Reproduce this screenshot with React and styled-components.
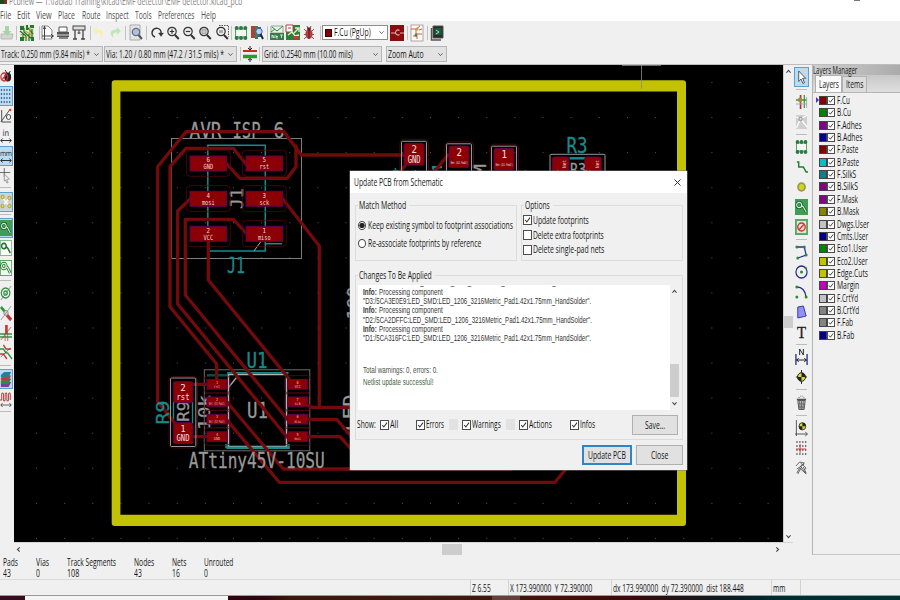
import React, { useLayoutEffect, useRef } from "react";
import styled, { createGlobalStyle, css } from "styled-components";

const Global = createGlobalStyle`
  * { box-sizing: border-box; }
  html, body { margin: 0; padding: 0; overflow: hidden; background: #fff; }
  body { font-family: "Open Sans", "Noto Sans", sans-serif; font-size: 10.2px; color: #161616; }
`;

/* ---------- condensed text ---------- */
const FitBox = styled.span`
  display: inline-block;
  flex: none;
  width: ${(p) => p.$w}px;
  margin-left: ${(p) => p.$ml || 0}px;
  margin-top: -1px;
  white-space: nowrap;
  line-height: 12px;
  height: 12px;
`;
const FitInner = styled.span`
  display: inline-block;
  transform-origin: 0 50%;
  white-space: pre;
`;
function Fit({ w, ml, children }) {
  const ref = useRef(null);
  useLayoutEffect(() => {
    const el = ref.current;
    el.style.transform = `scaleX(${w / el.offsetWidth})`;
  }, [w]);
  return (
    <FitBox $w={w} $ml={ml}>
      <FitInner ref={ref}>{children}</FitInner>
    </FitBox>
  );
}

/* ---------- frame ---------- */
const Window = styled.div`
  width: 900px; height: 600px; overflow: hidden; position: relative;
  display: flex; flex-direction: column; background: #f0f0f0;
`;
const TitleBar = styled.div`
  height: 9px; flex: none; background: #fff; color: #858585; display: flex; align-items: flex-start; overflow: hidden;
`;
const TitleIcon = styled.i`width: 7px; height: 4px; background: linear-gradient(90deg, #174d17 60%, #8a2a1c 60%);`;
const TitleText = styled.div`margin: -6px 0 0 2px; height: 12px;`;
const TitleButton = styled.i`width: 6px; height: 1px; margin-left: 612px; background: #777;`;
const MenuBar = styled.nav`
  height: 12px; flex: none; background: #fff; display: flex; align-items: center; color: #505050;
`;
const Toolbar = styled.div`
  height: ${(p) => p.$h}px; flex: none; display: flex; align-items: center;
  background: #f0f0f0; border-bottom: ${(p) => (p.$edge ? "1px solid #bdbdbd" : "0")};
`;
const ToolSlot = styled.span`
  width: 14px; height: 16px; flex: none; margin-left: ${(p) => p.$ml}px; display: flex;
`;
const Rule = styled.i`
  width: 1px; height: 14px; flex: none; background: #c2c2c2; margin-left: ${(p) => p.$ml}px;
`;
const Combo = styled.div`
  width: ${(p) => p.$w}px; height: ${(p) => p.$h || 16}px; flex: none; margin-left: ${(p) => p.$ml}px;
  display: flex; align-items: center; justify-content: space-between; padding: 0 3px 0 1px;
  background: ${(p) => (p.$light ? "#fff" : "#e2e2e2")}; border: 1px solid ${(p) => (p.$light ? "#8c8c8c" : "#b5b5b5")};
`;
const ComboSwatch = styled.i`width: 7px; height: 8px; background: #840000; border: 1px solid #3a0000; margin: 0 2px 0 1px;`;
const ComboValue = styled.span`display: flex; align-items: center;`;
const Svg = styled.svg`display: block; width: 100%; height: 100%; overflow: visible;`;

const Workspace = styled.div`height: 490px; flex: none; display: flex;`;
const LeftTools = styled.div`width: 14px; flex: none; overflow: hidden; display: flex; flex-direction: column;`;
const RightTools = styled.div`
  width: 19px; flex: none; display: flex; flex-direction: column; align-items: center; padding-right: 3px;
`;
const SideTool = styled.span`
  flex: none; display: flex; width: ${(p) => (p.$left ? 14 : 15)}px; height: 20px;
  margin-top: ${(p) => p.$mt || 0}px; margin-left: ${(p) => (p.$left ? -1 : 0)}px;
  padding: 2px 1px;
  ${(p) => p.$on && css`background: #b9dcf4; box-shadow: inset 0 0 0 1px #5aa0d0;`}
`;
const SideRule = styled.i`
  flex: none; height: 1px; width: 11px; background: #bcbcbc; margin-top: ${(p) => p.$mt}px;
`;
const Center = styled.div`width: 779px; flex: none; display: flex; flex-direction: column;`;
const CanvasRow = styled.div`height: 477px; display: flex;`;
const Board = styled.svg`width: 769px; height: 477px; display: block; background: #000; flex: none;`;
const VScroll = styled.div`
  width: 10px; flex: none; display: flex; flex-direction: column; align-items: center; border-left: 1px solid #ccc;
`;
const HScroll = styled.div`height: 13px; display: flex; align-items: center; border-top: 1px solid #d5d5d5;`;
const Thumb = styled.i`
  flex: none; background: #cdcdcd; width: ${(p) => p.$w}px; height: ${(p) => p.$h}px;
  margin-top: ${(p) => p.$mt || 0}px; margin-left: ${(p) => p.$ml || 0}px;
`;
const Arrow = styled.svg`
  width: 5px; height: 5px; flex: none; fill: none; stroke: #444; stroke-width: ${(p) => (p.$thin ? 0.9 : 1.3)};
  margin-top: ${(p) => p.$mt || 0}px; margin-left: ${(p) => p.$ml || 0}px;
  transform: rotate(${(p) => p.$r || 0}deg);
`;
const Chevron = (p) => (
  <Arrow viewBox="0 0 6 6" {...p}><path d="M.5 1.5 3 4.3 5.5 1.5" /></Arrow>
);

/* ---------- layers ---------- */
const LayersPanel = styled.aside`
  width: 88px; flex: none; display: flex; flex-direction: column; overflow: hidden;
  border-left: 1px solid #b4b4b4; border-bottom: 1px solid #c8c8c8;
`;
const PanelTitle = styled.div`
  height: 10px; flex: none; display: flex; align-items: center; background: linear-gradient(90deg, #cfcfcf, #ababab);
`;
const TabStrip = styled.div`
  height: 18px; flex: none; display: flex; align-items: flex-end; padding-left: 2px; border-bottom: 1px solid #b5b5b5;
  background: linear-gradient(#c8c8c8, #dedede);
`;
const Tab = styled.div`
  height: ${(p) => (p.$on ? 17 : 16)}px; width: ${(p) => p.$w}px; display: flex; align-items: center; justify-content: center;
  background: ${(p) => (p.$on ? "#fafafa" : "#dcdcdc")}; border: 1px solid #b0b0b0; border-bottom: 0;
`;
const LayerList = styled.div`padding-top: 1.3px; display: flex; flex-direction: column;`;
const LayerRow = styled.div`height: 12.37px; display: flex; align-items: center; padding-left: 1px;`;
const Marker = styled.i`
  width: 0; height: 0; margin: 0 0 0 2px; border: 3px solid transparent; border-right: 0;
  border-left: 3px solid ${(p) => (p.$on ? "#3a3ac8" : "transparent")};
`;
const Swatch = styled.i`width: 8px; height: 9px; background: ${(p) => p.$c}; border: 1px solid #444;`;
const Box = styled.i`
  width: ${(p) => p.$s || 8}px; height: ${(p) => (p.$s ? p.$s + 1 : 9)}px; flex: none; background: #fff; border: 1px solid #4c4c4c;
  display: flex; margin-left: ${(p) => p.$ml || 0}px;
`;
const Tick = () => (
  <Svg viewBox="0 0 6 7"><path d="M1 3.5 2.4 5.2 5.2 1.4" fill="none" stroke="#333" strokeWidth=".9" /></Svg>
);

/* ---------- bottom ---------- */
const Counts = styled.div`height: 25px; flex: none; display: flex; border-bottom: 1px solid #dadada;`;
const Count = styled.div`
  flex: none; width: ${(p) => p.$w}px; padding: 2px 0 0 3px; display: flex; flex-direction: column;
`;
const StatusBar = styled.div`height: 15px; flex: none; display: flex; padding-left: 470px;`;
const StatusCell = styled.div`
  width: ${(p) => p.$w}px; height: 15px; flex: none; border-left: 1px solid #d2d2d2; display: flex; align-items: center;
  padding: 1px 0 0 1px;
`;
const Taskbar = styled.div`
  height: 5px; flex: none; display: flex; border-top: 1px solid #999;
  background: linear-gradient(90deg, #3a0a20 0 228px, #33000f 228px, #2a0710 262px, #3d1707 290px, #40190a 500px, #421004 570px, #350b0b 640px, #0a1c24 730px, #002d35 780px, #002f33);
`;
const TaskActive = styled.i`width: 203px; margin-left: 25px; background: #f4f4f4;`;
const TaskItem = styled.i`width: 28px; margin-left: 264px; background: #664038;`;

/* ---------- dialog ---------- */
const Dialog = styled.section`
  position: absolute; left: 350px; top: 171px; width: 337px; height: 299px; background: #f0f0f0;
  display: flex; flex-direction: column; box-shadow: 0 0 0 .5px #777;
`;
const DialogTitle = styled.header`
  height: 22px; flex: none; background: #fff; display: flex; align-items: center; justify-content: space-between; padding: 0 6px 0 4px;
`;
const CloseX = styled.svg`width: 7px; height: 7px; stroke: #333; stroke-width: 1;`;
const Groups = styled.div`display: flex; gap: 4px; padding: 7px 4px 0 5px; height: 77px; flex: none;`;
const Group = styled.fieldset`
  margin: 0; padding: 0; min-width: 0; border: 0; display: flex; flex-direction: column; width: ${(p) => p.$w}px;
  height: ${(p) => p.$h}px; flex: none;
`;
const GroupHead = styled.div`
  display: flex; align-items: center; height: 11px; flex: none;
  &::before { content: ""; width: 3px; height: 1px; background: #dcdcdc; }
  &::after { content: ""; flex: 1; height: 1px; background: #dcdcdc; margin-left: 3px; }
`;
const GroupBody = styled.div`
  flex: 1; border: 1px solid #dcdcdc; border-top: 0; margin-top: -5px; padding-top: ${(p) => p.$pt || 0}px;
  display: flex; flex-direction: column;
`;
const Choice = styled.div`height: ${(p) => p.$h}px; flex: none; display: flex; align-items: center; padding-left: ${(p) => p.$pl}px; gap: ${(p) => p.$gap || 0}px;`;
const Radio = styled.i`
  width: 8px; height: 9px; border: 1px solid #444; border-radius: 50%; background: #fff; display: flex; flex: none;
  ${(p) => p.$on && css`background: radial-gradient(circle, #222 0 2.3px, #fff 3px);`}
`;
const Changes = styled.div`padding: 0 4px 0 5px; height: 170px; flex: none; display: flex;`;
const LogWrap = styled.div`height: 125px; flex: none; display: flex; padding: 0 2px;`;
const Log = styled.div`
  width: 312px; background: #fff; overflow: hidden; display: flex; flex-direction: column; padding-left: 5px;
  font-family: "Liberation Sans", Arial, sans-serif; font-size: 8.2px; color: #333;
`;
const LogLine = styled.div`
  height: 9.4px; flex: none; margin-top: ${(p) => p.$mt || 0}px; display: flex; align-items: center; color: ${(p) => p.$c || "#333"};
`;
const LogScroll = styled.div`width: 9px; flex: none; display: flex; flex-direction: column; align-items: center;`;
const ShowRow = styled.div`height: 29px; display: flex; align-items: center; padding-left: 1px;`;
const Stub = styled.i`width: 9px; height: 11px; flex: none; background: #e2e2e2; margin-left: ${(p) => p.$ml}px;`;
const Button = styled.div`
  width: ${(p) => p.$w}px; height: 20px; flex: none; margin-left: ${(p) => p.$ml || 0}px; background: #e1e1e1;
  border: ${(p) => (p.$primary ? "2px solid #2e86c4" : "1px solid #b0b0b0")};
  display: flex; align-items: center; justify-content: center; padding-top: 1px;
`;
const Footer = styled.footer`display: flex; padding: 5px 4px 0 0; justify-content: flex-end; gap: 4px;`;

/* ---------- icons ---------- */
const G = "#2c8a3c";
const magnifier = (inner) => (
  <g fill="none" stroke="#333" strokeWidth="1.2">
    <circle cx="6" cy="6.5" r="4.2" fill="#eee" />
    <path d="M9 10 12.8 14" strokeWidth="2" />
    {inner}
  </g>
);
const zonePath = (
  <g fill="none"><circle cx="4.5" cy="6" r="2.7" /><path d="M7 6.5 9 8l3 5" /></g>
);
const target = (
  <g><circle cx="7" cy="8" r="4.3" fill="#d8d838" stroke="#222" /><path d="M7 8V3.7A4.3 4.3 0 0 1 11.3 8zM7 8v4.3A4.3 4.3 0 0 1 2.7 8z" fill="#222" /></g>
);
const footprint = (
  <g>
    <rect x="1.5" y="4" width="11" height="8" fill="#f3f8f3" stroke={G} strokeWidth=".8" />
    <g fill="#2a7d41"><circle cx="2.7" cy="3" r="2" /><circle cx="7" cy="3" r="2" /><circle cx="11.3" cy="3" r="2" /><circle cx="2.7" cy="13" r="2" /><circle cx="7" cy="13" r="2" /><circle cx="11.3" cy="13" r="2" /></g>
  </g>
);
const ICONS = {
  save: <g><path d="M1 9h12l-1 5H1z" fill="#d2d6d2" stroke="#b5bab5" /><path d="M5 1h4v5h2.5L7 11 2.5 6H5z" fill="#a5d5a0" /></g>,
  board: <g><rect x="0" y="0" width="14" height="16" fill="#dfe6c4" /><path d="M0 1h4v4H0zM6 0h2v5H6zM10 0h4v3h-4zM0 12h4v4H0zM11 12h3v4h-3z" fill="#1e7a30" /><path d="M4 3v4l8 7M6 16v-5L0 6M12 4v8M8 3l5 6M3 8v7M9 9v7" stroke="#2f6d2c" fill="none" strokeWidth="1.2" /><path d="M5 6l7 4M10 2v9M1 9l6 6" stroke="#a4a43c" fill="none" /></g>,
  page: <g fill="none" stroke="#444"><path d="M2 1h6l4 4v9H2z" fill="#fff" stroke="#888" /><path d="M2 11h12M4.5 1v14M11 9l2 2-2 2M3 4l1.5-2L6 4" /></g>,
  print: <g><path d="M3 2h8v5H3z" fill="#fff" stroke="#555" /><path d="M1 7h12v5H1z" fill="#555" /><path d="M1 10h12" stroke="#ddd" /><path d="M3 13h9" stroke="#888" strokeWidth="2" /></g>,
  plot: <g fill="none" stroke="#444"><rect x="1" y="1" width="12" height="4" fill="#ddd" /><path d="M3 5v9M11 5v9M1 14h4M9 14h4" strokeWidth="1.3" /><path d="M7 5v4M5.5 8h3" /></g>,
  undo: <path d="M5 2 1 6l4 4V7.500c4-.5 5 2 3 6 6-5 3-9.500-3-9z" fill="#f6efb0" />,
  redo: <path d="M9 2l4 4-4 4V7.500c-4-.5-5 2-3 6-6-5-3-9.500 3-9z" fill="#bfe6b5" />,
  find: <g><path d="M1 0h10v15H1z" fill="#e2e4e8" stroke="#aaa" /><circle cx="7" cy="7" r="3.7" fill="#aac1dc" stroke="#66707e" strokeWidth="1.3" /><path d="M9.5 10 13 14" stroke="#555" strokeWidth="2" /></g>,
  redraw: <g fill="none" stroke="#333" strokeWidth="1.5"><path d="M5 12A4.5 4.5 0 1 1 11 8.5" /><path d="M8.5 8h5L11 11.5z" fill="#333" strokeWidth=".3" /></g>,
  zin: magnifier(<path d="M3.8 6.5h4.4M6 4.3v4.4" />),
  zout: magnifier(<path d="M3.8 6.5h4.4" />),
  zfit: magnifier(<rect x="4" y="4.5" width="4" height="4" fill="#c8c8c8" stroke="#aaa" />),
  zsel: <g><path d="M4 .5h9.5v11" fill="none" stroke="#555" strokeDasharray="1.5 1" />{magnifier(<path d="M4 5h4v3H4z" fill="#aaa" stroke="none" />)}</g>,
  fp: footprint,
  lib: <g><path d="M1 1h4v12H1z" fill="#b33f3a" /><path d="M5 1h3v13H5z" fill="#358547" /><path d="M8 2h3v10H8z" fill="#3561a8" /><circle cx="9" cy="6.5" r="3.2" fill="#b7d3ee" stroke="#3561a8" /><path d="M10.5 9 13 14" stroke="#223" strokeWidth="2" /></g>,
  net: <g><path d="M1 1h12v7H1z" fill="#e8f3e8" stroke="#96a896" /><path d="M2 2l5 4 6-5M1 7l4-3" stroke={G} fill="none" /><rect x="0" y="8" width="14" height="7" fill="#397c48" /><path d="M2 13V10l2 3v-3M6 10v3h2M6 11.5h2M10 10h3M11.5 10v3" stroke="#e8f5e8" strokeWidth=".8" fill="none" /></g>,
  sch: <g><rect width="14" height="15" fill="#2b8037" /><path d="M0 0h7v7H0z" fill="#fff" stroke="#a44" /><path d="M8 8 12 4M9 3h4v4M2 10l4-3 3 4 4-1" stroke="#e6eed6" fill="none" strokeWidth="1.3" /><path d="M8 11h4v3H8z" fill="#c93b30" /><path d="M2 3h3" stroke="#b33" /></g>,
  bug: <g><path d="M2 4l3 3M12 4 9 7M2 9.5h10M2 14l3-3M12 14l-3-3M5 1l1 3M9 1 8 4" stroke="#6b3030" strokeWidth=".8" fill="none" /><ellipse cx="7" cy="9" rx="3.6" ry="5" fill="#b04040" /><circle cx="7" cy="4" r="1.8" fill="#622" /><path d="M7 5v9" stroke="#611" /></g>,
  redvia: <g><rect x="-1" y="0" width="14" height="16" fill="#8b0c0c" /><path d="M8.5 5.5A2.5 2.5 0 1 0 8.5 9.5M0 8h4M9 8h4" stroke="#d9b0b0" fill="none" strokeWidth="1.1" /></g>,
  scheme: <g><rect x="1" y="0" width="12" height="16" fill="#fdf9f2" stroke="#8a8a8a" strokeWidth=".7" /><path d="M1 4h5l4-3M6 4v5h6M3 11h4v3M9 5l3-1" stroke="#c0392b" strokeWidth=".8" fill="none" /><circle cx="7" cy="4" r="1.6" fill="#d69b35" /><circle cx="6" cy="10" r="1.5" fill="#3c8a45" /></g>,
  term: <g><path d="M3 1h10v12H3z" fill="#2a2a2a" stroke="#555" /><path d="M4.5 3h7v7h-7z" fill="#1d5b3c" /><path d="M6 5l3 2-3 2" stroke="#9fe0b8" fill="none" /><path d="M1.5 3v12h9.5" stroke="#555" fill="none" strokeWidth="1.5" /></g>,
  width: <g><path d="M0 5h14" stroke="#c42c2c" strokeWidth="2" /><path d="M0 10.5h14" stroke="#259b30" strokeWidth="3.5" /><path d="M7 0v4M7 16v-3M5 2l2 2 2-2M5 14l2-1.5L9 14" stroke="#222" fill="none" /></g>,
  drc: <g><ellipse cx="9" cy="9" rx="4" ry="4.5" fill="#222" /><path d="M6 2l2 3M12 3l-2 3" stroke="#222" /><circle cx="5" cy="9" r="4" fill="none" stroke="#c83232" strokeWidth="1.5" /><path d="M2.5 11.5l5-5" stroke="#c83232" strokeWidth="1.4" /></g>,
  grid: <g fill="none" stroke="#223f63" strokeWidth="1.4" strokeDasharray="1.4 1.8"><path d="M1 2h12M1 6h12M1 10h12M1 14h12" /></g>,
  polar: <g fill="none" stroke="#444"><path d="M1 14 12 1M2 2v12h11" /><circle cx="10" cy="9" r="2.5" /><circle cx="12" cy="2" r="1.3" fill="#d33" stroke="none" /></g>,
  inch: <g><text x="3" y="8" fontFamily="DejaVu Sans" fontSize="8.5" fill="#333">in</text><path d="M1 12.5h12M3 10.5 1 12.5l2 2M11 10.5l2 2-2 2" stroke="#222" fill="none" /></g>,
  mm: <g><text x="0" y="8" fontFamily="DejaVu Sans" fontSize="7.5" fill="#333" textLength="14">mm</text><path d="M1 12.5h12M3 10.5 1 12.5l2 2M11 10.5l2 2-2 2" stroke="#222" fill="none" /></g>,
  cross: <g fill="none" stroke="#444"><path d="M5 0v9M0 4.5h12" strokeWidth=".8" /><path d="M5 6l6 5-3 .5 1.5 3-1.5.5L6.500 12 5 13z" fill="#eee" stroke="#777" strokeWidth=".7" /></g>,
  rats: <g><rect width="14" height="16" fill="#cfd3cf" /><path d="M3 4l8 8M11 4 3 12" stroke="#fff" strokeWidth="1.5" />{[[3, 3], [11, 4], [3, 12], [11, 12]].map(([x, y]) => <circle key={x + "-" + y} cx={x} cy={y} r="1.8" fill="#dede6a" stroke="#8c8c20" strokeWidth=".8" />)}</g>,
  zoneF: <g><rect width="14" height="16" fill="#3f9d55" /><g stroke="#0f5c25" strokeWidth="2.6">{zonePath}</g><g stroke="#d6eedb" strokeWidth="1.2">{zonePath}</g></g>,
  zoneN: <g><rect x=".5" y=".5" width="13" height="15" fill="#fff" stroke="#7dbd87" /><g stroke="#21742f" strokeWidth="1.7">{zonePath}</g></g>,
  zoneO: <g><rect x=".5" y=".5" width="13" height="15" fill="#f1faf1" stroke="#5ca868" /><g stroke="#21742f" strokeWidth="3.2">{zonePath}</g><g stroke="#dff2df" strokeWidth="1.3">{zonePath}</g></g>,
  via: <g fill="none" stroke="#2f9440"><circle cx="6.5" cy="8" r="5" strokeWidth="1.4" /><circle cx="6.5" cy="8" r="2" strokeWidth="1.4" /><path d="M1 15 13 1" stroke="#777" strokeWidth=".8" /></g>,
  pads: <g><path d="M1 2l5 5" stroke="#2f9440" strokeWidth="3" /><path d="M8 10l5 5" stroke="#c83232" strokeWidth="3.5" /><circle cx="7" cy="8" r="2.5" fill="#ddd" stroke="#888" /><path d="M1 15 13 1" stroke="#888" strokeWidth=".8" /></g>,
  tracks: <g><path d="M7.5 0v9" stroke="#c83232" strokeWidth="3" /><path d="M0 9h14M0 12h14" stroke="#2f9440" strokeWidth="1.3" /><path d="M6 8v8M9 8v8M1 15 13 2" stroke="#a44" strokeWidth=".8" /></g>,
  contrast: <g fill="none" strokeWidth="1.6"><path d="M0 4h4l3 4h2l5 6" stroke="#2f9440" /><path d="M4 0l3 4h6M0 9h4l4 5" stroke="#bf3a3a" /><path d="M1 12l11-9" stroke="#444" strokeWidth=".7" /></g>,
  layers: <g><path d="M1 13l4-2h8l-3 5H1z" fill="#7d3f96" /><path d="M1 10 5 7.5h8L10 13H1z" fill="#2f8a46" /><path d="M1 7l4-2.5h8L10 9.5H1z" fill="#c53a35" /><path d="M1 4 5 1h8l-3 5.5H1z" fill="#2c7d94" /></g>,
  wave: <g fill="none"><path d="M0 9h2V3q1-2 2 0v6q1 2 2 0V3q1-2 2 0v6q1 2 2 0V3q1-2 2 0v6" stroke="#b33a3a" strokeWidth="1.1" /><path d="M1 14h12M3 12l-2 2 2 2M11 12l2 2-2 2" stroke="#333" strokeWidth=".8" /></g>,
  arrow: <path d="M4 2v10.500l2.500-2.500 2 4.500 1.700-.8-2-4.400H11.500z" fill="#fff" stroke="#444" strokeWidth=".9" />,
  hilite: <g fill="none"><path d="M1 6h12M10 1v13" stroke="#2f9440" strokeWidth="1.3" /><path d="M6 1v14" stroke="#b83131" strokeWidth="1.8" /><path d="M1 10h12M12.5 3v11" stroke="#aaa" /><circle cx="5.5" cy="6" r="2.4" fill="#9c9433" /></g>,
  local: <g><rect x="1" y="1" width="12" height="14" fill="#cfcfcf" /><path d="M1.5 14 6 5l7 8M1 3l5 2 7-4" stroke="#fff" fill="none" strokeWidth="1.3" /><circle cx="6" cy="5" r="1.8" fill="#ddd" stroke="#888" /></g>,
  route: <path d="M2 3h2v5h5l3 5h2" fill="none" stroke="#1f7f2f" strokeWidth="1.5" />,
  addvia: <g><circle cx="7" cy="8" r="4.7" fill="#969657" /><circle cx="7" cy="8" r="2.9" fill="#d4d41c" /></g>,
  keepout: <g><rect width="14" height="16" fill="#5aa766" /><rect x="2" y="2" width="10" height="12" fill="#d3ebd3" /><circle cx="7" cy="8" r="4" fill="#fbdada" stroke="#cc3535" strokeWidth="1.5" /><path d="M4.5 10.5l5-5" stroke="#cc3535" strokeWidth="1.5" /></g>,
  poly: <g><path d="M2 3h8l2 8-9 3" fill="none" stroke="#2a2a8f" strokeWidth="1.3" /><circle cx="2" cy="3" r="1.6" fill={G} /><circle cx="10" cy="3" r="1.6" fill={G} /><circle cx="12" cy="11" r="1.6" fill={G} /><circle cx="3" cy="14" r="1.6" fill={G} /></g>,
  circle: <g><circle cx="7" cy="8" r="6" fill="none" stroke="#2a2a8f" strokeWidth="1.3" /><circle cx="7" cy="8" r="1.6" fill={G} /><circle cx="11.5" cy="4" r="1.3" fill={G} /></g>,
  arc: <g><path d="M2 3c6 0 9 4 10 10" fill="none" stroke="#2a2a8f" strokeWidth="1.4" /><circle cx="2" cy="3" r="1.6" fill={G} /><circle cx="2" cy="13" r="1.6" fill={G} /><circle cx="12" cy="13" r="1.6" fill={G} /></g>,
  fill: <path d="M3 3l6-1 3 10-9 2z" fill="#8f93ef" stroke="#3333b0" />,
  text: <text x="7" y="13.500" textAnchor="middle" fontFamily="Liberation Serif" fontSize="16" fill="#222" stroke="#222" strokeWidth=".3">T</text>,
  dim: <g fill="none" stroke="#222"><path d="M1 5v11M13 5v11" stroke="#28289a" strokeWidth="1.4" /><path d="M1 11h12M4 9l-2 2 2 2M10 9l2 2-2 2" /><path d="M5 6V0l4 6V0" /></g>,
  anchor: <g><path d="M7 1v14M1 8h12" stroke="#222" />{target}</g>,
  trash: <g fill="none" stroke="#555"><path d="M3 5.5 4.2 14.5h5.600L11 5.5z" fill="#ccc" /><path d="M2 4.5h10" strokeWidth="1.6" /><path d="M5 6l.5 8M7 6v8M9 6l-.5 8M3.5 9h7M4 12h6" strokeWidth=".8" /><path d="M4 3q3-4 6 0" strokeDasharray="1 1" /></g>,
  origin: <g><path d="M1.5 0v16M0 14h13M11 12l2.5 2-2.500 2" stroke="#444" fill="none" strokeWidth=".9" /><g transform="translate(2 -.5) scale(.85)">{target}</g></g>,
  gridorg: <g fill="none"><path d="M1.500 2h11M1.500 6h11M1.500 10h11M1.500 14h11" stroke="#333" strokeWidth="1.3" strokeDasharray="1.3 1.800" /><path d="M5.5 4v9M1 9h11" stroke="#cc3333" strokeWidth=".9" /></g>,
  measure: <g fill="none" stroke="#555" strokeWidth=".9"><path d="M1 6 5 2l5 1-4 3 6 8-7-6-3 5M6 3l6 5-2 2M2 9l8-5M7 7l-4 7M9 7l3 6" /></g>,
};
const Icon = ({ n }) => <Svg viewBox="0 0 14 16" preserveAspectRatio="none">{ICONS[n]}</Svg>;

/* ---------- data ---------- */
const MENUS = [["File", 11, 0], ["Edit", 13, 6], ["View", 15.5, 6], ["Place", 17, 6.5], ["Route", 18.5, 6.5], ["Inspect", 22.5, 6], ["Tools", 16.5, 6.5], ["Preferences", 36.5, 6.5], ["Help", 15, 6.5]];

const TOP_A = [["save", 0], ["|", 2], ["board", 3], ["|", 5], ["page", 0], ["print", 2], ["plot", 2], ["|", 4], ["undo", 1], ["redo", 2], ["|", 3], ["find", 3], ["|", 3], ["redraw", 2.5], ["zin", 2.5], ["zout", 2], ["zfit", 2], ["zsel", 3], ["|", 2], ["fp", 1.5], ["lib", 2.5], ["|", 3], ["net", 2], ["sch", 2], ["bug", 2], ["|", 4]];
const TOP_B = [["redvia", 3], ["|", 2], ["scheme", 2], ["|", 3], ["term", 2]];

const LEFT = [["drc", 1], ["grid", 0, 1], ["polar", 0], ["inch", 0], ["mm", 0, 1], ["cross", 0], ["|", 1], ["rats", 4, 1], ["|", 2], ["zoneF", 3, 1], ["zoneN", 0], ["zoneO", 0], ["|", 2], ["via", 2], ["pads", 0], ["tracks", 0], ["contrast", 0], ["|", 2], ["layers", 3, 1], ["wave", 0], ["|", 2]];
const RIGHT = [["arrow", 1.5, 1], ["|", 2], ["hilite", 2], ["local", 0], ["|", 2], ["fp", 2], ["route", 0], ["addvia", 0], ["zoneF", 0], ["keepout", 0], ["|", 2], ["poly", 2], ["circle", 0], ["arc", 0], ["fill", 0], ["text", 0], ["|", 2], ["dim", 2], ["anchor", 0], ["|", 2], ["trash", 3], ["|", 2], ["origin", 2], ["gridorg", 0], ["measure", 0]];

const LAYERS = [["F.Cu", "#840000", 13], ["B.Cu", "#008400", 14], ["F.Adhes", "#840084", 24.5], ["B.Adhes", "#000084", 25.5], ["F.Paste", "#840000", 21.5], ["B.Paste", "#00c2c2", 22], ["F.SilkS", "#008484", 19.5], ["B.SilkS", "#840084", 21], ["F.Mask", "#840084", 21], ["B.Mask", "#848400", 22], ["Dwgs.User", "#c2c2c2", 32.5], ["Cmts.User", "#000084", 31], ["Eco1.User", "#008400", 30.5], ["Eco2.User", "#c2c200", 30.5], ["Edge.Cuts", "#c2c200", 31], ["Margin", "#c200c2", 22], ["F.CrtYd", "#c2c2c2", 21], ["B.CrtYd", "#848484", 22], ["F.Fab", "#848484", 16], ["B.Fab", "#000084", 17]];

const COUNTS = [["Pads", "43", 15, 8, 33], ["Vias", "0", 13, 4, 30.5], ["Track Segments", "108", 49, 12, 67], ["Nodes", "43", 20.5, 8, 38], ["Nets", "16", 14.5, 8, 32], ["Unrouted", "0", 29.5, 4, 60]];

/* ---------- circuit board drawing ---------- */
const TRACKS = [
  "M404 155H301.3L284 131.7H186L157.7 166.7V401.7L178 427",
  "M226 163L240 178.3H287.3L296 166.7V146",
  "M246 164.3L233.3 148.3H186L170 166.7V306.7L216.7 364V384",
  "M191 198.3L177.7 211V304L287 437",
  "M246 233L233.3 219.3H185.3V295L288 420",
  "M208.3 241V280L290 380",
  "M282 198L319.3 246V407",
  "M300 401.7L311.7 407.3H352",
  "M300 419.3H336.7L352 437",
  "M300 436.7H340L352 450",
  "M226 400.7L283.3 469H511",
  "M226 419L279.3 482.3H555L566 469",
  "M183 384.3H217M183 436.7H217",
  "M448 155L434 172M408 162L400 172",
];
const CONN = [[190, 156, "6", "GND"], [246, 156, "5", "rst"], [190, 191.3, "4", "mosi"], [246, 191.3, "3", "sck"], [190, 226.3, "2", "VCC"], [246, 226.3, "1", "miso"]];
const SOIC = [[207, 379.5, "1", "rst"], [207, 397, "2", "Net-(D1-Pad2)"], [207, 414.3, "3", "Net-(D2-Pad2)"], [207, 431.8, "4", "GND"], [287.7, 379.5, "8", "VCC"], [287.7, 397, "7", "sck"], [287.7, 414.3, "6", "miso"], [287.7, 431.8, "5", "mosi"]];
const T = ({ x, y, s, w, c = "#989898", r, children }) => (
  <text x={x} y={y} fontSize={s} fill={c} stroke={c} strokeWidth={s > 14 ? 0.3 : 0} textAnchor="middle" fontFamily="DejaVu Sans Mono, monospace"
    textLength={w} lengthAdjust="spacingAndGlyphs" transform={r ? `rotate(-90 ${x} ${y})` : undefined}>{children}</text>
);
const Pad = ({ x, y, w, h, rx = 0 }) => <rect x={x} y={y} width={w} height={h} rx={rx} fill="#8b0005" stroke="#5d0050" strokeWidth="1" />;
const Halo = ({ x, y, w, h }) => <rect x={x} y={y} width={w} height={h} rx="4" fill="none" stroke="#560b0b" strokeWidth=".7" />;
const TEAL = "#198a8a";

function Pcb() {
  const dots = [];
  for (let i = 0; i < 27; i++) for (let j = 0; j < 14; j++) dots.push(<rect key={i + "-" + j} x={36 + i * 28.14} y={82 + j * 35.07} width="1" height="1" />);
  return (
    <Board viewBox="14 65 769 477">
      <g fill="#5a5a5a">{dots}</g>
      <path fillRule="evenodd" fill="#c2c200" d="M114.7 80.3H683a3 3 0 0 1 3 3V523a3 3 0 0 1-3 3H114.7a3 3 0 0 1-3-3V83.3a3 3 0 0 1 3-3zM120.4 91.5V514.7H677V91.5z" />
      <path d="M641.5 65V89M622 65.5H661" stroke="#8a8a8a" strokeWidth=".8" />

      <T x={205.5} y={138} s={20.5} w={32}>AVR</T>
      <T x={246.5} y={138} s={20.5} w={28}>ISP</T>
      <T x={279} y={138} s={20.5} w={11}>6</T>
      <g fill="none">
        <rect x="171.5" y="138.5" width="130" height="120" stroke="#8c8c8c" strokeWidth=".9" />
        <path d="M207.8 251V145.2H265.3V251H210M265.3 243.8H282" stroke={TEAL} strokeWidth="1.5" />
        <path d="M262 240l-8 11" stroke="#aaa" />
        <rect x="204.3" y="369.8" width="105.5" height="81" stroke="#777" strokeWidth=".9" />
        <rect x="228.5" y="374.5" width="58" height="72" stroke="#b5b5b5" strokeWidth="1.5" />
        <path d="M228.5 387.5l8-10" stroke="#aaa" strokeWidth="1.3" />
        <path d="M227 372.8H288.5M207 375.4H228" stroke={TEAL} strokeWidth="1.8" />
        <path d="M226.5 447.8H288.5V444M226.5 448v-4" stroke={TEAL} strokeWidth="2.6" />
        <path d="M173.5 402v22M192.5 402v22" stroke={TEAL} strokeWidth="1.3" />
        <path d="M569.5 158.3H585" stroke={TEAL} strokeWidth="2.5" />
      </g>

      <T x={257.5} y={418} s={20.5} w={21}>U1</T>
      <T x={242.5} y={198.5} s={17} w={21} r>J1</T>
      <T x={209.5} y={412.5} s={16.5} w={35} r>10k</T>
      <T x={359} y={303} s={16.5} w={33} r>100</T>
      <T x={356} y={413} s={17} w={37} r>LED</T>
      <T x={442} y={172} s={14} w={14} c={TEAL} r>M</T>
      <T x={486} y={170} s={17} w={12} r>M</T>
      <T x={396} y={178} s={14} w={8} c={TEAL}>t</T>
      <T x={416} y={180} s={14} w={8}>t</T>
      <T x={527} y={180} s={14} w={7} c={TEAL}>L</T>

      <g fill="none" stroke="#730b0d" strokeWidth="3.3" strokeLinejoin="round" strokeLinecap="round">
        {TRACKS.map((d) => <path key={d} d={d} />)}
      </g>

      {CONN.map(([x, y, a, b]) => (
        <g key={b}>
          <Halo x={x - 3.7} y={y - 5.7} w={44} h={26} />
          <Pad x={x} y={y} w={36.5} h={15} />
          <T x={x + 18.3} y={y + 6.3} s={6.8} w={3.5} c="#f0d8d8">{a}</T>
          <T x={x + 18.3} y={y + 13.2} s={7.2} w={b.length * 3.2} c="#f0d8d8">{b}</T>
        </g>
      ))}
      {SOIC.map(([x, y, a, b]) => (
        <g key={x + "-" + y}>
          <Halo x={x - 3} y={y - 4} w={26} h={17.5} />
          <Pad x={x} y={y} w={20} h={9.7} />
          <T x={x + 10} y={y + 4} s={4} w={2.2} c="#e5b5b5">{a}</T>
          <T x={x + 10} y={y + 8.3} s={4} w={b.length > 4 ? 16 : 6.5} c="#e5b5b5">{b}</T>
        </g>
      ))}

      <rect x="170.5" y="378" width="25.3" height="68.5" rx="1" fill="none" stroke="#a8a8a8" strokeWidth=".9" />
      <Halo x={169} y={376.5} w={28.5} h={71.5} />
      <T x={188.7} y={411.2} s={15.5} w={21} r>R9</T>
      <Pad x={173.3} y={381.7} w={19.5} h={21} rx={2} />
      <Pad x={173.3} y={422.7} w={19.5} h={21} rx={2} />
      <T x={183} y={391} s={9.5} w={5.5} c="#f3e2e2">2</T>
      <T x={183} y={400.3} s={9.5} w={13} c="#f3e2e2">rst</T>
      <T x={183} y={431.7} s={9.5} w={5} c="#f3e2e2">1</T>
      <T x={183} y={441.3} s={9.5} w={13} c="#f3e2e2">GND</T>

      {[[401.5, 141.3, "2", "GND", 13], [446.5, 143.8, "2", "Net-(D2-Pad2)", 17], [491.5, 146.2, "1", "Net-(D1-Pad2)", 17]].map(([x, y, a, b, w], i) => (
        <g key={x}>
          <Halo x={x - 1.5} y={y - 2} w={28.5} h={45} />
          <rect x={x} y={y} width="25" height="45" rx="1" fill="none" stroke="#a8a8a8" strokeWidth=".9" />
          <Pad x={x + 2.5} y={y + 2.3} w={20} h={21.5} rx={2} />
          <T x={x + 12.7} y={y + 12} s={10} w={5.5} c="#f3e2e2">{a}</T>
          <T x={x + 12.7} y={y + (i ? 20 : 21.5)} s={i ? 3.7 : 10} w={w} c="#f3e2e2">{b}</T>
        </g>
      ))}
      <rect x="550" y="154.3" width="55" height="30" rx="1" fill="none" stroke="#a8a8a8" strokeWidth=".9" />
      <Pad x={552.3} y={157} w={16.7} h={21} rx={2} />
      <Pad x={584.7} y={157} w={16.5} h={21} rx={2} />
      <T x={566} y={164} s={5} w={8} c="#f3d2d2" r>Net</T>
      <T x={599} y={164} s={5} w={8} c="#f3d2d2" r>Net</T>
      <T x={558} y={172} s={7} w={5} c="#f3d2d2" r>1</T>
      <T x={590} y={172} s={7} w={5} c="#f3d2d2" r>2</T>
      <T x={578} y={174.5} s={15.5} w={16}>R3</T>

      <T x={236} y={272.5} s={20.5} w={18} c={TEAL}>J1</T>
      <T x={257} y={367.5} s={21} w={21} c={TEAL}>U1</T>
      <T x={577} y={152.5} s={21} w={21} c={TEAL}>R3</T>
      <T x={169} y={412.5} s={18} w={24} c={TEAL} r>R9</T>
      <T x={256.8} y={467.7} s={20.5} w={136}>ATtiny45V-10SU</T>
    </Board>
  );
}

function TopTools({ items }) {
  return items.map(([n, ml], i) => (n === "|" ? <Rule key={i} $ml={ml} /> : <ToolSlot key={i} $ml={ml}><Icon n={n} /></ToolSlot>));
}
function Check({ on, label, w, ml }) {
  return (
    <>
      <Box $s={9} $ml={ml}>{on && <Tick />}</Box>
      <Fit w={w} ml={1}>{label}</Fit>
    </>
  );
}
const Info = () => (<><Fit w={14}><b>Info:</b></Fit><Fit w={63.5} ml={1.5}>Processing component</Fit></>);

function UpdateDialog() {
  return (
    <Dialog>
      <DialogTitle>
        <Fit w={89}>Update PCB from Schematic</Fit>
        <CloseX viewBox="0 0 7 7"><path d="M.5.5 6.5 6.5M6.5.5.5 6.5" /></CloseX>
      </DialogTitle>
      <Groups>
        <Group $w={162} $h={61}>
          <GroupHead><Fit w={47} ml={1}>Match Method</Fit></GroupHead>
          <GroupBody $pt={10}>
            <Choice $h={18} $pl={2} $gap={2}><Radio $on /><Fit w={145}>Keep existing symbol to footprint associations</Fit></Choice>
            <Choice $h={18} $pl={2} $gap={2}><Radio /><Fit w={113}>Re-associate footprints by reference</Fit></Choice>
          </GroupBody>
        </Group>
        <Group $w={162} $h={61}>
          <GroupHead><Fit w={25} ml={1}>Options</Fit></GroupHead>
          <GroupBody $pt={7}>
            <Choice $h={14.7} $pl={1}><Check on label="Update footprints" w={56} /></Choice>
            <Choice $h={14.7} $pl={1}><Check label="Delete extra footprints" w={71} /></Choice>
            <Choice $h={14.7} $pl={1}><Check label="Delete single-pad nets" w={71} /></Choice>
          </GroupBody>
        </Group>
      </Groups>
      <Changes>
        <Group $w={328} $h={170}>
          <GroupHead><Fit w={73} ml={1}>Changes To Be Applied</Fit></GroupHead>
          <GroupBody $pt={9}>
            <LogWrap>
              <Log>
                <LogLine $mt={-6.1}><Fit w={229}>"D4:/5CA3E0C1:LED_SMD:LED_1206_3216Metric_Pad1.42x1.75mm_HandSolder".</Fit></LogLine>
                <LogLine><Info /></LogLine>
                <LogLine><Fit w={228}>"D3:/5CA3E0E9:LED_SMD:LED_1206_3216Metric_Pad1.42x1.75mm_HandSolder".</Fit></LogLine>
                <LogLine><Info /></LogLine>
                <LogLine><Fit w={229}>"D2:/5CA2DFFC:LED_SMD:LED_1206_3216Metric_Pad1.42x1.75mm_HandSolder".</Fit></LogLine>
                <LogLine><Info /></LogLine>
                <LogLine><Fit w={228}>"D1:/5CA316FC:LED_SMD:LED_1206_3216Metric_Pad1.42x1.75mm_HandSolder".</Fit></LogLine>
                <LogLine $mt={22.5} $c="#465046"><Fit w={75}>Total warnings: 0, errors: 0.</Fit></LogLine>
                <LogLine $mt={1.9} $c="#3f5f3f"><Fit w={70.5}>Netlist update successful!</Fit></LogLine>
              </Log>
              <LogScroll>
                <Chevron $r={180} $mt={4} />
                <Thumb $w={9} $h={33} $mt={70} />
                <Chevron $mt={4} />
              </LogScroll>
            </LogWrap>
            <ShowRow>
              <Fit w={19}>Show:</Fit>
              <Check on label="All" w={8.5} ml={4} />
              <Check on label="Errors" w={18} ml={17.5} />
              <Stub $ml={4.5} />
              <Check on label="Warnings" w={29} ml={4.5} />
              <Stub $ml={4.5} />
              <Check on label="Actions" w={23} ml={4} />
              <Check on label="Infos" w={15.5} ml={18} />
              <Button $w={46} $ml={36.5}><Fit w={20}>Save...</Fit></Button>
            </ShowRow>
          </GroupBody>
        </Group>
      </Changes>
      <Footer>
        <Button $w={50} $primary><Fit w={38}>Update PCB</Fit></Button>
        <Button $w={47}><Fit w={17.5}>Close</Fit></Button>
      </Footer>
    </Dialog>
  );
}

export default function App() {
  return (
    <>
      <Global />
      <Window>
        <TitleBar>
          <TitleIcon />
          <TitleText><Fit w={233}>{"Pcbnew — T:\\fablab Training\\kicad\\EMF detector\\EMF detector.kicad_pcb"}</Fit></TitleText>
          <TitleButton />
        </TitleBar>
        <MenuBar>{MENUS.map(([t, w, ml]) => <Fit key={t} w={w} ml={ml}>{t}</Fit>)}</MenuBar>
        <Toolbar $h={23}>
          <TopTools items={TOP_A} />
          <Combo $w={66} $ml={1} $h={15} $light>
            <ComboValue><ComboSwatch /><Fit w={37}>F.Cu (PgUp)</Fit></ComboValue>
            <Chevron $thin />
          </Combo>
          <TopTools items={TOP_B} />
        </Toolbar>
        <Toolbar $h={21} $edge>
          <Combo $w={104} $ml={-1}><Fit w={89}>Track: 0.250 mm (9.84 mils) *</Fit><Chevron $thin /></Combo>
          <Combo $w={133} $ml={1}><Fit w={118}>Via: 1.20 / 0.80 mm (47.2 / 31.5 mils) *</Fit><Chevron $thin /></Combo>
          <Rule $ml={3} />
          <ToolSlot $ml={2}><Icon n="width" /></ToolSlot>
          <Rule $ml={2} />
          <Combo $w={120} $ml={2}><Fit w={89}>Grid: 0.2540 mm (10.00 mils)</Fit><Chevron $thin /></Combo>
          <Combo $w={61} $ml={4}><Fit w={36}>Zoom Auto</Fit><Chevron $thin /></Combo>
        </Toolbar>

        <Workspace>
          <LeftTools>
            {LEFT.map(([n, mt, on], i) => (n === "|" ? <SideRule key={i} $mt={mt} /> : <SideTool key={i} $left $mt={mt} $on={on}><Icon n={n} /></SideTool>))}
          </LeftTools>
          <Center>
            <CanvasRow>
              <Pcb />
              <VScroll>
                <Chevron $r={180} $mt={4} />
                <Thumb $w={9} $h={12} $mt={242} />
                <Chevron $mt={206} />
              </VScroll>
            </CanvasRow>
            <HScroll>
              <Chevron $r={90} $ml={2} />
              <Thumb $w={20} $h={11} $ml={421} />
              <Chevron $r={-90} $ml={313} />
            </HScroll>
          </Center>
          <RightTools>
            {RIGHT.map(([n, mt, on], i) => (n === "|" ? <SideRule key={i} $mt={mt} /> : <SideTool key={i} $mt={mt} $on={on}><Icon n={n} /></SideTool>))}
          </RightTools>
          <LayersPanel>
            <PanelTitle><Fit w={44.5}>Layers Manager</Fit></PanelTitle>
            <TabStrip>
              <Tab $w={27} $on><Fit w={20}>Layers</Fit></Tab>
              <Tab $w={25}><Fit w={17}>Items</Fit></Tab>
            </TabStrip>
            <LayerList>
              {LAYERS.map(([t, c, w], i) => (
                <LayerRow key={t}>
                  <Marker $on={i === 0} />
                  <Swatch $c={c} /><Box><Tick /></Box>
                  <Fit w={w} ml={2}>{t}</Fit>
                </LayerRow>
              ))}
            </LayerList>
          </LayersPanel>
        </Workspace>

        <Counts>
          {COUNTS.map(([t, v, w, vw, cw]) => (
            <Count key={t} $w={cw}><Fit w={w}>{t}</Fit><Fit w={vw}>{v}</Fit></Count>
          ))}
        </Counts>
        <StatusBar>
          <StatusCell $w={38}><Fit w={19}>Z 6.55</Fit></StatusCell>
          <StatusCell $w={103}><Fit w={82.5}>{"X 173.990000  Y 72.390000"}</Fit></StatusCell>
          <StatusCell $w={160}><Fit w={131}>{"dx 173.990000  dy 72.390000  dist 188.448"}</Fit></StatusCell>
          <StatusCell $w={29}><Fit w={12.5}>mm</Fit></StatusCell>
          <StatusCell $w={100} />
        </StatusBar>
        <Taskbar><TaskActive /><TaskItem /></Taskbar>
        <UpdateDialog />
      </Window>
    </>
  );
}
